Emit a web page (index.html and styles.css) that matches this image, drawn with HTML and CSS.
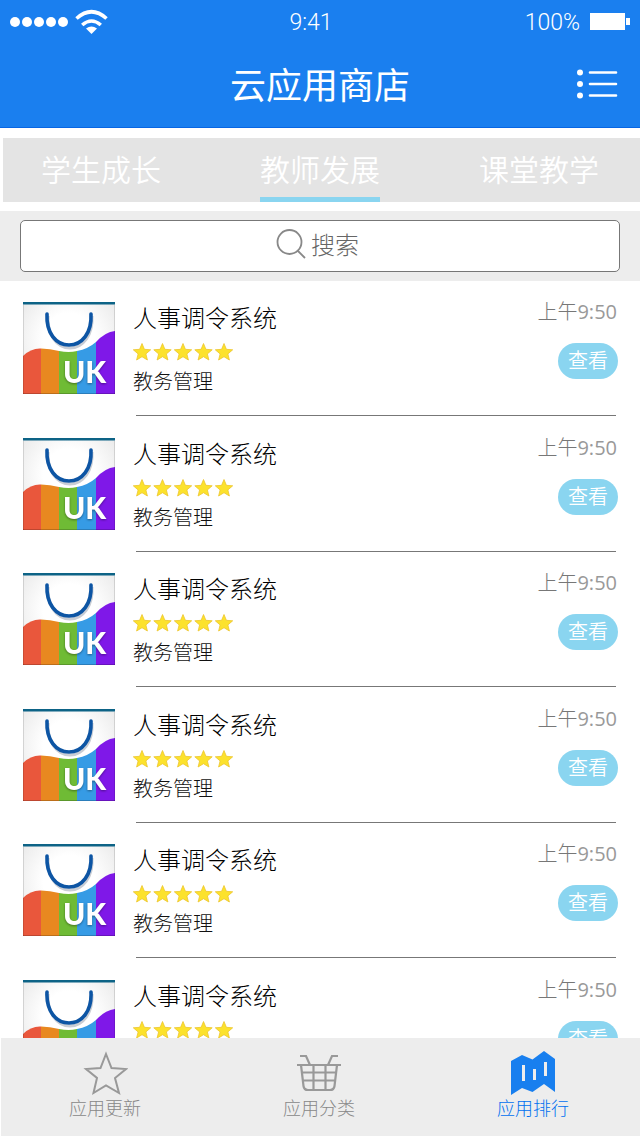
FILE: index.html
```html
<!DOCTYPE html>
<html lang="zh-CN">
<head>
<meta charset="utf-8">
<meta name="viewport" content="width=device-width, initial-scale=1">
<title>云应用商店</title>
<link rel="stylesheet" href="styles.css">
</head>
<body>
<svg class="sprite" aria-hidden="true">
  <defs>
    <radialGradient id="paper" cx=".5" cy=".4" r=".7"><stop offset=".4" stop-color="#fff"/><stop offset="1" stop-color="#e6e6e6"/></radialGradient>
  </defs>
  <symbol id="app" viewBox="0 0 92 92">
    <rect width="92" height="92" fill="url(#paper)"/>
    <path d="M25 14C24 33 34 46 47 46S70 33 69 14" fill="none" stroke="#c9cdd4" stroke-width="3"/>
    <path d="M24 12C23 31 33 43 46 43S69 31 68 12" fill="none" stroke="#0d55a4" stroke-width="3.6" stroke-linecap="round"/>
    <path d="M0 54Q8 46 18 46.500V92H0Z" fill="#e9573c"/>
    <path d="M18 46.500Q27 46.500 36 49V92H18Z" fill="#e88820"/>
    <path d="M36 49Q46 51 54 49V92H36Z" fill="#6fbb35"/>
    <path d="M54 49Q65 47 73 40V92H54Z" fill="#369be5"/>
    <path d="M73 40Q82 30 92 29V92H73Z" fill="#7f18e8"/>
    <path d="M0 91.500H92" stroke="#00000030"/>
    <path d="M.5 3V92M91.500 3V92" stroke="#00000020"/>
    <rect width="92" height="2.500" fill="#0d6386"/>
  </symbol>
  <symbol id="stars" viewBox="0 0 100 20">
    <g fill="#fce22c" stroke="#ecc52e" stroke-width=".8">
      <path id="star" d="M9 1.500 11.400 7.300 17.700 7.800 12.900 11.900 14.400 18 9 14.700 3.600 18 5.100 11.900.3 7.800 6.600 7.300Z"/>
      <use href="#star" x="20.500"/><use href="#star" x="41"/><use href="#star" x="61.500"/><use href="#star" x="82"/>
    </g>
  </symbol>
</svg>

<header class="header">
  <div class="status">
    <div class="signal">
      <svg width="100" height="28" viewBox="0 0 100 28" role="img" aria-label="信号">
        <g fill="#fff"><circle cx="6" cy="14" r="5"/><circle cx="18" cy="14" r="5"/><circle cx="30" cy="14" r="5"/><circle cx="42" cy="14" r="5"/><circle cx="54" cy="14" r="5"/><path d="M77 20.500Q82.500 16.500 88 20.500L82.500 26Z"/></g>
        <g fill="none" stroke="#fff" stroke-width="3.600"><path d="M67.500 10.500Q82.500-3 97.500 10.500"/><path d="M73.200 17Q82.500 9 91.800 17"/></g>
      </svg>
    </div>
    <time>9:41</time>
    <div class="battery"><span>100%</span>
      <svg width="41" height="18" viewBox="0 0 41 18" aria-hidden="true"><path fill="#fff" d="M0 0H35V17H0ZM36 5H40V12H36Z"/></svg>
    </div>
  </div>
  <div class="titlebar">
    <h1>云应用商店</h1>
    <button class="menu" type="button" aria-label="菜单">
      <svg width="42" height="32" viewBox="0 0 42 32"><g fill="#fff"><circle cx="4" cy="4.500" r="3"/><circle cx="4" cy="16" r="3"/><circle cx="4" cy="27.500" r="3"/></g><path d="M14 4.500H40M14 16H40M14 27.500H40" stroke="#fff" stroke-width="2.600" stroke-linecap="round"/></svg>
    </button>
  </div>
</header>

<nav class="tabs" aria-label="分类">
  <a href="#growth">学生成长</a>
  <a href="#teacher" class="active" aria-current="page">教师发展</a>
  <a href="#class">课堂教学</a>
</nav>

<form class="search">
  <label class="search-box">
    <svg class="search-icon" width="30" height="30" viewBox="0 0 30 30" aria-hidden="true"><g fill="none" stroke="#888" stroke-width="1.800"><circle cx="13.500" cy="13" r="12"/><path d="M21.500 21.500 29 29"/></g></svg>
    <input type="search" placeholder="搜索" aria-label="搜索">
  </label>
</form>

<ul class="list">
  <li><article class="row"><svg class="app-icon" role="img" aria-label="UK"><use href="#app"/><text class="app-mark" x="40" y="81">UK</text></svg><div class="info"><h2>人事调令系统</h2><svg class="stars" role="img" aria-label="五星"><use href="#stars"/></svg><p>教务管理</p></div><div class="side"><time>上午<span>9:50</span></time><button type="button">查看</button></div></article><hr></li>
  <li><article class="row"><svg class="app-icon" role="img" aria-label="UK"><use href="#app"/><text class="app-mark" x="40" y="81">UK</text></svg><div class="info"><h2>人事调令系统</h2><svg class="stars" role="img" aria-label="五星"><use href="#stars"/></svg><p>教务管理</p></div><div class="side"><time>上午<span>9:50</span></time><button type="button">查看</button></div></article><hr></li>
  <li><article class="row"><svg class="app-icon" role="img" aria-label="UK"><use href="#app"/><text class="app-mark" x="40" y="81">UK</text></svg><div class="info"><h2>人事调令系统</h2><svg class="stars" role="img" aria-label="五星"><use href="#stars"/></svg><p>教务管理</p></div><div class="side"><time>上午<span>9:50</span></time><button type="button">查看</button></div></article><hr></li>
  <li><article class="row"><svg class="app-icon" role="img" aria-label="UK"><use href="#app"/><text class="app-mark" x="40" y="81">UK</text></svg><div class="info"><h2>人事调令系统</h2><svg class="stars" role="img" aria-label="五星"><use href="#stars"/></svg><p>教务管理</p></div><div class="side"><time>上午<span>9:50</span></time><button type="button">查看</button></div></article><hr></li>
  <li><article class="row"><svg class="app-icon" role="img" aria-label="UK"><use href="#app"/><text class="app-mark" x="40" y="81">UK</text></svg><div class="info"><h2>人事调令系统</h2><svg class="stars" role="img" aria-label="五星"><use href="#stars"/></svg><p>教务管理</p></div><div class="side"><time>上午<span>9:50</span></time><button type="button">查看</button></div></article><hr></li>
  <li><article class="row"><svg class="app-icon" role="img" aria-label="UK"><use href="#app"/><text class="app-mark" x="40" y="81">UK</text></svg><div class="info"><h2>人事调令系统</h2><svg class="stars" role="img" aria-label="五星"><use href="#stars"/></svg><p>教务管理</p></div><div class="side"><time>上午<span>9:50</span></time><button type="button">查看</button></div></article><hr></li>
</ul>

<nav class="bottom" aria-label="主导航">
  <a href="#update"><svg width="46" height="46" viewBox="0 0 46 46" aria-hidden="true"><path d="M24 3 29.500 17 44 18 33 27 37 42 24 34.500 11.500 42 15 27 4 18 18.500 17Z" fill="none" stroke="#999" stroke-width="2"/></svg><span>应用更新</span></a>
  <a href="#category"><svg width="46" height="46" viewBox="0 0 46 46" aria-hidden="true"><path d="M1 14H45M4 5H10L14 14M42 5H36L32 14M5 14 7.500 35Q8 39 12 39H34Q38 39 38.500 35L41 14M6 21.500H40M7 29.500H39M17.500 14V39M29.500 14V39" fill="none" stroke="#999" stroke-width="2.200"/></svg><span>应用分类</span></a>
  <a href="#rank" class="active" aria-current="page"><svg width="46" height="46" viewBox="0 0 46 46" aria-hidden="true"><path fill="#187fef" d="M1 10 12 4 22.500 8.500 34 0 45 8V41L34 33 22.500 41 12 37 1 44Z"/><path d="M13.500 14V30M24.500 18V29M35.500 11V25" stroke="#ededed" stroke-width="3"/></svg><span>应用排行</span></a>
</nav>
</body>
</html>
```
FILE: styles.css
```css
* { box-sizing: border-box; }
body {
  margin: 0;
  height: 100vh;
  display: flex;
  flex-direction: column;
  background: #fff;
  color: #000;
  font-family: "Open Sans", "Noto Sans CJK SC", sans-serif;
  font-weight: 300;
}
h1, h2, p, ul { margin: 0; padding: 0; font-weight: inherit; }
a { text-decoration: none; color: inherit; }
button, input { font: inherit; }
svg { display: block; flex: none; }
.sprite { position: absolute; width: 0; height: 0; }

.header { background: #1a7fef; border-bottom: 1px solid #0866e4; color: #fff; flex: none; }
.status {
  display: grid;
  grid-template-columns: 1fr auto 1fr;
  align-items: center;
  height: 40px;
  padding: 0 9px;
  font: 300 23px/40px Roboto, Arial, sans-serif;
}
.status time, .status span { padding-top: 3px; }
.status time { padding-right: 18px; }
.battery { display: flex; justify-content: flex-end; align-items: center; gap: 10px; height: 40px; }
.titlebar {
  display: grid;
  grid-template-columns: 1fr auto 1fr;
  align-items: center;
  height: 87px;
  padding: 0 22px;
}
.titlebar h1 { grid-column: 2; padding-top: 4px; font-size: 36px; line-height: 48px; font-weight: 400; }
.menu { justify-self: end; padding: 0; border: 0; background: none; }

.tabs {
  display: flex;
  justify-content: space-between;
  flex: none;
  margin: 10px 0 9px 3px;
  padding: 0 41px 0 38px;
  background: #e4e4e4;
  color: #fff;
  font-size: 30px;
  font-weight: 350;
  line-height: 55px;
}
.tabs a { padding-top: 4px; border-bottom: 5px solid transparent; }
.tabs .active { border-color: #8ad5f0; }

.search { flex: none; padding: 9px 20px; background: #ededed; }
.search-box { display: block; position: relative; }
.search-icon { position: absolute; left: calc(50% - 44px); top: 9px; }
.search input {
  display: block;
  width: 100%;
  height: 52px;
  padding: 0 0 4px 30px;
  border: 1px solid #777;
  border-radius: 5px;
  background: #fff;
  font-size: 24px;
  text-align: center;
  appearance: none;
}
.search input::placeholder { color: #666; }
.search input::-webkit-search-cancel-button { display: none; }

.list { flex: 1; min-height: 0; overflow-y: auto; scrollbar-width: none; list-style: none; }
.list li:nth-child(odd) { padding-bottom: 1px; }
.list hr { height: 1px; margin: 0 24px 0 136px; border: 0; background: #777; }
.row { display: flex; height: 134px; padding: 21px 22px 0 23px; }
.app-icon { width: 92px; height: 92px; }
.app-mark { font: 900 30px Lato, sans-serif; fill: #fff; filter: drop-shadow(0 1px 1px #0006); }
.info { flex: 1; padding-left: 18px; }
.info h2 { font-size: 24px; line-height: 32px; }
.stars { width: 100px; height: 20px; margin: 8px 0; }
.info p { font-size: 20px; line-height: 24px; color: #111; }
.side { display: flex; flex-direction: column; align-items: flex-end; }
.side time { padding-right: 1px; font-size: 20px; line-height: 20px; color: #777; }
.side time span { font-weight: 400; color: #999; }
.side button {
  width: 60px;
  height: 36px;
  margin-top: 21px;
  padding: 0;
  border: 0;
  border-radius: 18px;
  background: #8ad5f0;
  color: #fff;
  font-size: 20px;
  font-weight: 350;
  line-height: 36px;
}

.bottom {
  display: flex;
  justify-content: space-between;
  flex: none;
  height: 98px;
  margin-left: 1px;
  padding: 13px 71px 0 68px;
  background: #ededed;
  color: #888;
  font-size: 18px;
  line-height: 22px;
}
.bottom a { display: flex; flex-direction: column; align-items: center; }
.bottom .active { color: #0070f0; }
```
